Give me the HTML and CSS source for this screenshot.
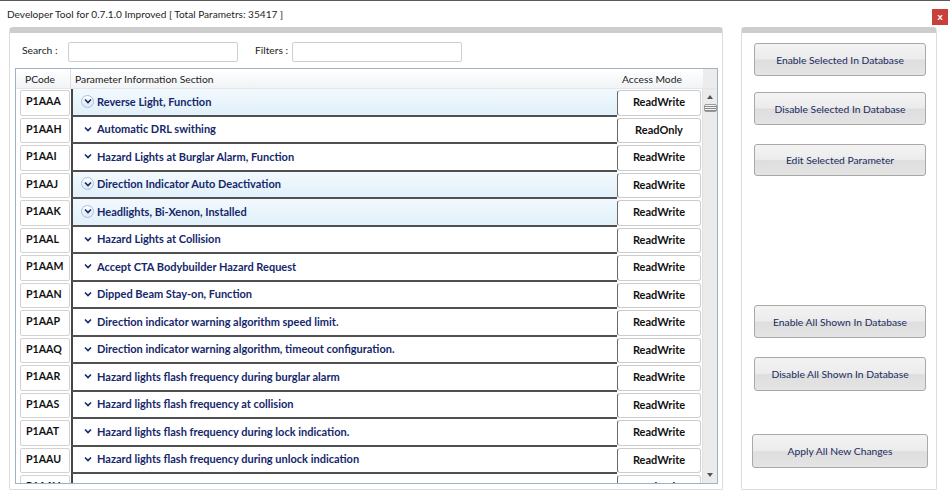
FILE: index.html
```html
<!DOCTYPE html>
<html lang="en">
<head>
    <meta charset="UTF-8">
    <title>Developer Tool</title>
    <link rel="stylesheet" href="styles.css">
</head>
<body>
    <div class="titlebar">
        <span class="title">Developer Tool for 0.7.1.0 Improved [ Total Parametrs: 35417 ]</span>
        <span class="close">x</span>
    </div>

    <div class="main">
        <div class="panel left">
            <div class="filters">
                <label class="lbl-search">Search :</label>
                <input class="box search" type="text">
                <label class="lbl-filter">Filters :</label>
                <input class="box" type="text">
            </div>

            <div class="grid">
                <div class="head">
                    <span class="h-pc">PCode</span>
                    <span class="h-desc">Parameter Information Section</span>
                    <span class="h-acc">Access Mode</span>
                    <span class="h-bar"></span>
                </div>
                <div class="body">
                    <div class="rows">
                        <div class="row on"><span class="pc">P1AAA</span><span class="desc"><i class="chev"><svg viewBox="0 0 8 6" width="8" height="6"><polyline points="1,1.5 4,4.5 7,1.5"/></svg></i>Reverse Light, Function</span><span class="acc">ReadWrite</span></div>
                        <div class="row"><span class="pc">P1AAH</span><span class="desc"><i class="chev"><svg viewBox="0 0 8 6" width="8" height="6"><polyline points="1,1.5 4,4.5 7,1.5"/></svg></i>Automatic DRL swithing</span><span class="acc">ReadOnly</span></div>
                        <div class="row"><span class="pc">P1AAI</span><span class="desc"><i class="chev"><svg viewBox="0 0 8 6" width="8" height="6"><polyline points="1,1.5 4,4.5 7,1.5"/></svg></i>Hazard Lights at Burglar Alarm, Function</span><span class="acc">ReadWrite</span></div>
                        <div class="row on"><span class="pc">P1AAJ</span><span class="desc"><i class="chev"><svg viewBox="0 0 8 6" width="8" height="6"><polyline points="1,1.5 4,4.5 7,1.5"/></svg></i>Direction Indicator Auto Deactivation</span><span class="acc">ReadWrite</span></div>
                        <div class="row on"><span class="pc">P1AAK</span><span class="desc"><i class="chev"><svg viewBox="0 0 8 6" width="8" height="6"><polyline points="1,1.5 4,4.5 7,1.5"/></svg></i>Headlights, Bi-Xenon, Installed</span><span class="acc">ReadWrite</span></div>
                        <div class="row"><span class="pc">P1AAL</span><span class="desc"><i class="chev"><svg viewBox="0 0 8 6" width="8" height="6"><polyline points="1,1.5 4,4.5 7,1.5"/></svg></i>Hazard Lights at Collision</span><span class="acc">ReadWrite</span></div>
                        <div class="row"><span class="pc">P1AAM</span><span class="desc"><i class="chev"><svg viewBox="0 0 8 6" width="8" height="6"><polyline points="1,1.5 4,4.5 7,1.5"/></svg></i>Accept CTA Bodybuilder Hazard Request</span><span class="acc">ReadWrite</span></div>
                        <div class="row"><span class="pc">P1AAN</span><span class="desc"><i class="chev"><svg viewBox="0 0 8 6" width="8" height="6"><polyline points="1,1.5 4,4.5 7,1.5"/></svg></i>Dipped Beam Stay-on, Function</span><span class="acc">ReadWrite</span></div>
                        <div class="row"><span class="pc">P1AAP</span><span class="desc"><i class="chev"><svg viewBox="0 0 8 6" width="8" height="6"><polyline points="1,1.5 4,4.5 7,1.5"/></svg></i>Direction indicator warning algorithm speed limit.</span><span class="acc">ReadWrite</span></div>
                        <div class="row"><span class="pc">P1AAQ</span><span class="desc"><i class="chev"><svg viewBox="0 0 8 6" width="8" height="6"><polyline points="1,1.5 4,4.5 7,1.5"/></svg></i>Direction indicator warning algorithm, timeout configuration.</span><span class="acc">ReadWrite</span></div>
                        <div class="row"><span class="pc">P1AAR</span><span class="desc"><i class="chev"><svg viewBox="0 0 8 6" width="8" height="6"><polyline points="1,1.5 4,4.5 7,1.5"/></svg></i>Hazard lights flash frequency during burglar alarm</span><span class="acc">ReadWrite</span></div>
                        <div class="row"><span class="pc">P1AAS</span><span class="desc"><i class="chev"><svg viewBox="0 0 8 6" width="8" height="6"><polyline points="1,1.5 4,4.5 7,1.5"/></svg></i>Hazard lights flash frequency at collision</span><span class="acc">ReadWrite</span></div>
                        <div class="row"><span class="pc">P1AAT</span><span class="desc"><i class="chev"><svg viewBox="0 0 8 6" width="8" height="6"><polyline points="1,1.5 4,4.5 7,1.5"/></svg></i>Hazard lights flash frequency during lock indication.</span><span class="acc">ReadWrite</span></div>
                        <div class="row"><span class="pc">P1AAU</span><span class="desc"><i class="chev"><svg viewBox="0 0 8 6" width="8" height="6"><polyline points="1,1.5 4,4.5 7,1.5"/></svg></i>Hazard lights flash frequency during unlock indication</span><span class="acc">ReadWrite</span></div>
                        <div class="row"><span class="pc">P1AAV</span><span class="desc"></span><span class="acc">ReadWrite</span></div>
                    </div>
                    <div class="scroll">
                        <span class="arrow up"></span>
                        <span class="thumb"></span>
                        <span class="arrow down"></span>
                    </div>
                </div>
            </div>
        </div>

        <div class="panel right">
            <button class="btn b1">Enable Selected In Database</button>
            <button class="btn b2">Disable Selected In Database</button>
            <button class="btn b3">Edit Selected Parameter</button>
            <button class="btn b4">Enable All Shown In Database</button>
            <button class="btn b5">Disable All Shown In Database</button>
            <button class="btn apply">Apply All New Changes</button>
        </div>
    </div>
</body>
</html>
```

FILE: styles.css
```css
body {
    margin: 0;
    background: #fff;
    border-top: 1px solid #5a5a5a;
    font-family: Lato, "Open Sans", sans-serif;
    color: #222;
}

.titlebar {
    height: 26px;
    display: flex;
    align-items: center;
    justify-content: space-between;
    padding: 0 2px 0 7px;
}

.title {
    font-size: 10.1px;
    color: #1e1e1e;
}

.close {
    width: 16px;
    height: 16px;
    margin-top: 5px;
    background: #c8403b;
    color: #fff;
    font-size: 10px;
    font-weight: bold;
    line-height: 14px;
    text-align: center;
}

.main {
    display: flex;
    gap: 18px;
    padding: 0 13px 0 9px;
    height: 463px;
}

.panel {
    box-sizing: border-box;
    border: 1px solid #dcdcdc;
    border-top: 6px solid #cdcdcd;
    border-radius: 4px 4px 2px 2px;
}

.left {
    flex: 1;
    padding: 0 4px 0 5px;
}

.right {
    width: 196px;
    display: flex;
    flex-direction: column;
    align-items: flex-start;
    padding-left: 12px;
}

/* search row */
.filters {
    display: flex;
    align-items: center;
    height: 20px;
    margin: 9px 0 6px 7px;
    font-size: 10.3px;
}

.filters label {
    align-self: flex-start;
    line-height: 16px;
}

.lbl-search {
    width: 46px;
}

.lbl-filter {
    margin-left: 17px;
    width: 37px;
}

.box {
    box-sizing: border-box;
    width: 170px;
    height: 20px;
    margin: 0;
    border: 1px solid #cfcfcf;
    border-radius: 2px;
    background: #fff;
}

/* table */
.grid {
    box-sizing: border-box;
    height: 416px;
    border: 1px solid #9fb1c4;
    display: flex;
    flex-direction: column;
}

.head {
    height: 19px;
    display: flex;
    align-items: center;
    font-size: 10.3px;
    color: #222;
    background: linear-gradient(#ffffff, #f1f3f6);
    border-bottom: 1px solid #e2e6ea;
}

.head span {
    box-sizing: border-box;
    height: 100%;
    display: flex;
    align-items: center;
}

.h-pc {
    width: 55px;
    padding-left: 9px;
    border-right: 1px solid #dedede;
}

.h-desc {
    flex: 1;
    padding-left: 4px;
}

.h-acc {
    width: 85px;
    padding-left: 4px;
}

.h-bar {
    width: 14px;
    background: #ececec;
}

.body {
    flex: 1;
    display: flex;
    overflow: hidden;
}

.rows {
    flex: 1;
    overflow: hidden;
}

.row {
    display: grid;
    grid-template-columns: 55px 1fr 85px;
    height: 27.5px;
}

.pc {
    box-sizing: border-box;
    margin: 1px 1px 1px 4px;
    padding: 4px 0 0 5px;
    border: 1px solid #d2d2d2;
    border-radius: 2px;
    font-size: 10.6px;
    font-weight: bold;
    color: #111;
}

.desc {
    box-sizing: border-box;
    display: flex;
    align-items: center;
    padding: 0 0 1px 8px;
    border-left: 2px solid #464646;
    border-bottom: 2px solid #505050;
    font-size: 11px;
    font-weight: bold;
    color: #15276b;
    white-space: nowrap;
}

.chev {
    box-sizing: border-box;
    width: 13px;
    height: 13px;
    margin-right: 3px;
    border-radius: 50%;
    display: flex;
    align-items: center;
    justify-content: center;
}

.chev svg {
    fill: none;
    stroke: #15276b;
    stroke-width: 1.6;
}

.row.on .desc {
    background: linear-gradient(#f2f9fd, #e1f0fa);
}

.row.on .chev {
    border: 1px solid #a9c0d9;
    background: linear-gradient(#ffffff, #dbe8f5);
}

.acc {
    box-sizing: border-box;
    margin: 1px 1px 1px 0;
    padding-top: 4px;
    border: 1px solid #cccccc;
    border-left-color: #6a6a6a;
    border-radius: 3px;
    text-align: center;
    font-size: 11px;
    font-weight: bold;
    color: #111;
}

.scroll {
    width: 14px;
    background: #ebebeb;
    border-left: 1px solid #e0e0e0;
    position: relative;
}

.arrow {
    position: absolute;
    left: 4px;
    width: 0;
    height: 0;
    border-left: 3px solid transparent;
    border-right: 3px solid transparent;
}

.arrow.up {
    top: 6px;
    border-bottom: 4px solid #555;
}

.arrow.down {
    bottom: 6px;
    border-top: 4px solid #555;
}

.thumb {
    position: absolute;
    top: 15px;
    left: 1px;
    width: 11px;
    height: 6px;
    background: repeating-linear-gradient(#f4f4f4 0 1px, #8a8a8a 1px 2px);
    border: 1px solid #9a9a9a;
    border-radius: 2px;
}

/* right buttons */
.btn {
    box-sizing: border-box;
    width: 172px;
    height: 33px;
    border: 1px solid #a9a9a9;
    border-radius: 3px;
    background: linear-gradient(#f3f3f3 0%, #ececec 48%, #dedede 52%, #e4e4e4 100%);
    font-family: Lato, "Open Sans", sans-serif;
    font-size: 10.3px;
    color: #202c60;
    padding: 0;
}

.b1 { margin-top: 10px; }
.b2 { margin-top: 16px; }
.b3 { margin-top: 19px; height: 32px; }
.b4 { margin-top: 129px; }
.b5 { margin-top: 19px; height: 34px; }
.apply { margin-top: 43px; margin-left: -2px; width: 176px; height: 34px; }
```
